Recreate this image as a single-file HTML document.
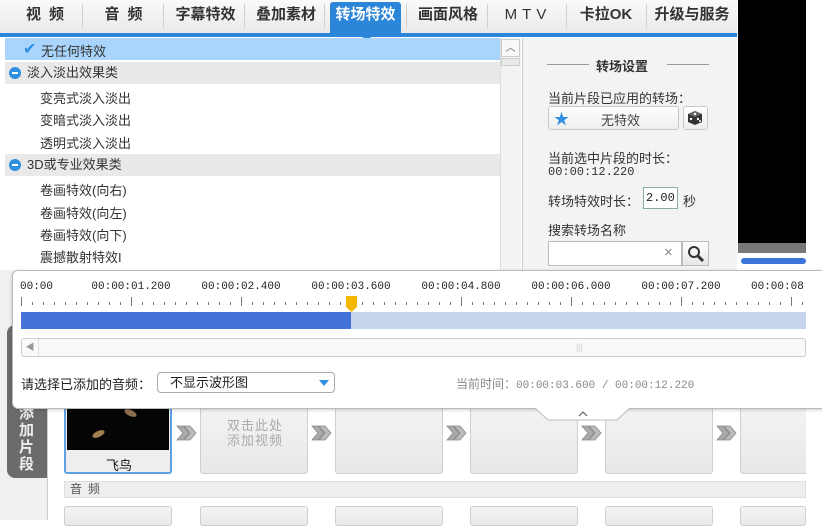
<!DOCTYPE html>
<html><head><meta charset="utf-8"><style>
*{box-sizing:border-box;margin:0;padding:0}
body{width:822px;height:520px;overflow:hidden;background:#fff;position:relative;font-family:"Liberation Sans","Noto Sans CJK SC",sans-serif;font-size:13px;color:#222}
.a{position:absolute}
.tab{position:absolute;top:0;height:30px;line-height:30px;font-size:15px;color:#333;text-align:center;font-weight:bold}
.sep{position:absolute;top:4px;width:1px;height:24px;background:#d0d0d0}
.item{position:absolute;left:40px;font-size:13px;color:#333}
.grp{position:absolute;left:5px;width:495px;height:22px;background:#e9e9e9;line-height:22px;font-size:13px;color:#333}
.grp i{position:absolute;left:4px;top:5px;width:12px;height:12px;border-radius:50%;background:#2f8fe0}
.grp i:after{content:"";position:absolute;left:3px;top:5px;width:6px;height:2px;background:#fff}
.grp span{position:absolute;left:22px}
.box{position:absolute;border:1px solid #cfcfcf;border-radius:3px;background:linear-gradient(#f4f4f4,#e8e8e8)}
.arr{position:absolute}
.mono{font-family:"Liberation Mono",monospace}
.lb{position:absolute;top:281px;font-family:"Liberation Mono",monospace;font-size:11px;color:#222;width:80px;text-align:center}
</style></head><body>
<div class="a" style="left:0;top:0;width:737px;height:33px;background:linear-gradient(#fafafa,#e9e9e9)"></div>
<div class="a" style="left:0;top:33px;width:737px;height:4px;background:#2b85d8"></div>
<div class="tab" style="left:18px;width:62px;letter-spacing:8px">视频</div>
<div class="sep" style="left:82px"></div>
<div class="tab" style="left:95px;width:65px;letter-spacing:8px">音频</div>
<div class="sep" style="left:163px"></div>
<div class="tab" style="left:168px;width:75px">字幕特效</div>
<div class="sep" style="left:244px"></div>
<div class="tab" style="left:248px;width:76px">叠加素材</div>
<div class="sep" style="left:324px"></div>
<div class="a" style="left:330px;top:2px;width:71px;height:31px;background:#2b85d8;border-radius:3px 3px 0 0"></div>
<div class="a" style="left:361px;top:33px;width:12px;height:6px;background:#2b85d8;border-radius:0 0 6px 6px"></div>
<div class="tab" style="left:330px;width:71px;color:#fff">转场特效</div>
<div class="sep" style="left:406px"></div>
<div class="tab" style="left:410px;width:76px">画面风格</div>
<div class="sep" style="left:487px"></div>
<div class="tab" style="left:490px;width:76px;letter-spacing:5px;font-weight:normal">MTV</div>
<div class="sep" style="left:566px"></div>
<div class="tab" style="left:568px;width:76px">卡拉OK</div>
<div class="sep" style="left:646px"></div>
<div class="tab" style="left:648px;width:88px">升级与服务</div>
<div class="a" style="left:738px;top:0;width:68px;height:243px;background:#000"></div>
<div class="a" style="left:738px;top:243px;width:68px;height:10px;background:#777"></div>
<div class="a" style="left:738px;top:253px;width:68px;height:17px;background:#fff"></div>
<div class="a" style="left:741px;top:258px;width:65px;height:6px;background:#3b74d8;border-radius:3px"></div>
<div class="a" style="left:5px;top:38px;width:495px;height:22px;background:#a9d4fb"></div>
<div class="a" style="left:23px;top:39px;font-size:16px;color:#2f8fe0">✔</div>
<div class="a" style="left:41px;top:41px;color:#333">无任何特效</div>
<div class="grp" style="top:62px"><i></i><span>淡入淡出效果类</span></div>
<div class="item" style="top:88px">变亮式淡入淡出</div>
<div class="item" style="top:110px">变暗式淡入淡出</div>
<div class="item" style="top:133px">透明式淡入淡出</div>
<div class="grp" style="top:154px"><i></i><span>3D或专业效果类</span></div>
<div class="item" style="top:180px">卷画特效(向右)</div>
<div class="item" style="top:203px">卷画特效(向左)</div>
<div class="item" style="top:225px">卷画特效(向下)</div>
<div class="item" style="top:247px">震撼散射特效I</div>
<div class="a" style="left:500px;top:38px;width:21px;height:232px;background:#f3f3f3;border-left:1px solid #ddd"></div>
<div class="a" style="left:501px;top:39px;width:19px;height:18px;border:1px solid #ccc;background:#f8f8f8;text-align:center;font-size:10px;color:#666;line-height:18px">︿</div>
<div class="a" style="left:501px;top:58px;width:19px;height:8px;border:1px solid #ccc;background:#e9e9e9"></div>
<div class="a" style="left:522px;top:38px;width:215px;height:232px;background:#f3f3f3;border-left:1px solid #ccc"></div>
<div class="a" style="left:547px;top:64px;width:42px;height:1px;background:#999"></div>
<div class="a" style="left:667px;top:64px;width:42px;height:1px;background:#999"></div>
<div class="a" style="left:596px;top:56px;font-weight:bold;color:#333">转场设置</div>
<div class="a" style="left:548px;top:88px;color:#333">当前片段已应用的转场：</div>
<div class="a" style="left:548px;top:106px;width:131px;height:24px;border:1px solid #c8c8c8;border-radius:3px;background:linear-gradient(#fff,#eee)"></div>
<div class="a" style="left:554px;top:108px;color:#2f8fe0;font-size:15px">★</div>
<div class="a" style="left:601px;top:110px;color:#444">无特效</div>
<div class="a" style="left:683px;top:106px;width:25px;height:24px;border:1px solid #c8c8c8;border-radius:3px;background:linear-gradient(#fff,#eee)"></div>
<svg class="a" style="left:686px;top:109px" width="19" height="18"><path d="M9 2L16 5L16 13L9 16L2 13L2 5Z" fill="#333"/><path d="M9 2L16 5L9 8L2 5Z" fill="#666"/><circle cx="9" cy="5" r="1.2" fill="#fff"/><circle cx="5" cy="10" r="1.2" fill="#fff"/><circle cx="12" cy="10" r="1.2" fill="#fff"/><circle cx="14" cy="12" r="1" fill="#fff"/></svg>
<div class="a" style="left:548px;top:148px;color:#333">当前选中片段的时长：</div>
<div class="a mono" style="left:548px;top:165px;color:#333;font-size:12px">00:00:12.220</div>
<div class="a" style="left:548px;top:191px;color:#333">转场特效时长：</div>
<div class="a mono" style="left:643px;top:187px;width:35px;height:22px;border:1px solid #8aa;background:#fff;font-size:12px;line-height:20px;padding-left:2px">2.00</div>
<div class="a" style="left:683px;top:191px;color:#333">秒</div>
<div class="a" style="left:548px;top:220px;color:#333">搜索转场名称</div>
<div class="a" style="left:548px;top:241px;width:134px;height:25px;border:1px solid #bbb;background:#fff"></div>
<div class="a" style="left:664px;top:244px;color:#888;font-size:15px">×</div>
<div class="a" style="left:682px;top:241px;width:27px;height:25px;border:1px solid #bbb;background:linear-gradient(#fff,#e8e8e8)"></div>
<svg class="a" style="left:686px;top:244px" width="20" height="20"><circle cx="8" cy="8" r="5" fill="none" stroke="#333" stroke-width="2"/><path d="M12 12L17 17" stroke="#333" stroke-width="3"/></svg>
<!-- bottom -->
<div class="a" style="left:0;top:270px;width:47px;height:250px;background:#f0f0f0"></div>
<div class="a" style="left:7px;top:325px;width:40px;height:153px;background:#6b6b6b;border-radius:8px 0 0 8px"></div>
<div class="a" style="left:19px;top:405px;width:16px;color:#eee;font-size:15px;font-weight:bold;line-height:17px">添加片段</div>
<div class="a" style="left:47px;top:270px;width:1px;height:250px;background:#ccc"></div>
<div class="box" style="left:64px;top:402px;width:108px;height:72px;border:2px solid #5fa0e0;background:#eee"></div>
<div class="a" style="left:67px;top:402px;width:102px;height:48px;background:#050505"></div>
<div class="a" style="left:124px;top:410px;width:13px;height:6px;background:#8a7050;border-radius:50%;transform:rotate(25deg)"></div>
<div class="a" style="left:92px;top:431px;width:13px;height:6px;background:#a08050;border-radius:50%;transform:rotate(-25deg)"></div>
<div class="a" style="left:106px;top:455px;font-size:13px;color:#111">飞鸟</div>
<div class="box" style="left:200px;top:402px;width:108px;height:72px"></div>
<div class="a" style="left:223px;top:418px;width:64px;color:#aaa;font-size:13px;line-height:15px;text-align:center;letter-spacing:1px">双击此处<br>添加视频</div>
<div class="box" style="left:335px;top:402px;width:108px;height:72px"></div>
<div class="box" style="left:470px;top:402px;width:108px;height:72px"></div>
<div class="box" style="left:605px;top:402px;width:108px;height:72px"></div>
<div class="box" style="left:740px;top:402px;width:80px;height:72px"></div>
<svg class="a" style="left:0;top:424px" width="822" height="20"><defs><g id="ar"><path d="M0 2H6L12 9L6 16H0L6 9Z" fill="#aaa" stroke="#888" stroke-width=".8"/><path d="M7 2H13L19 9L13 16H7L13 9Z" fill="#bbb" stroke="#888" stroke-width=".8"/></g></defs>
<use href="#ar" x="177"/><use href="#ar" x="312"/><use href="#ar" x="447"/><use href="#ar" x="582"/><use href="#ar" x="717"/></svg>
<div class="a" style="left:64px;top:481px;width:742px;height:17px;background:#eee;border:1px solid #ddd;font-size:12px;color:#555;padding-left:5px;letter-spacing:6px;line-height:15px">音频</div>
<div class="box" style="left:64px;top:506px;width:108px;height:20px"></div>
<div class="box" style="left:200px;top:506px;width:108px;height:20px"></div>
<div class="box" style="left:335px;top:506px;width:108px;height:20px"></div>
<div class="box" style="left:470px;top:506px;width:108px;height:20px"></div>
<div class="box" style="left:605px;top:506px;width:108px;height:20px"></div>
<div class="box" style="left:740px;top:506px;width:66px;height:20px"></div>
<div class="a" style="left:806px;top:0;width:16px;height:520px;background:#fff"></div>
<!-- popup -->
<div class="a" style="left:12px;top:270px;width:810px;height:139px;background:#fff;border:1px solid #bbb;border-right:none;border-radius:6px 0 0 6px;box-shadow:0 1px 3px rgba(0,0,0,.2)"></div>
<svg class="a" style="left:535px;top:407px" width="95" height="16"><path d="M0 1L13 13H82L95 1" fill="#fff" stroke="#bbb"/><path d="M2 0H93" stroke="#fff" stroke-width="2"/><path d="M44 9L48 5L52 9" fill="none" stroke="#555"/></svg>
<div class="lb" style="left:20px;text-align:left">00:00</div>
<div class="lb" style="left:91px">00:00:01.200</div>
<div class="lb" style="left:201px">00:00:02.400</div>
<div class="lb" style="left:311px">00:00:03.600</div>
<div class="lb" style="left:421px">00:00:04.800</div>
<div class="lb" style="left:531px">00:00:06.000</div>
<div class="lb" style="left:641px">00:00:07.200</div>
<div class="lb" style="left:751px;width:60px;text-align:left">00:00:08</div>
<svg class="a" style="left:0;top:296px" width="822" height="12">
<g stroke="#777" stroke-width="1">
<path d="M21.5 1V10M131.5 1V10M241.5 1V10M351.5 1V10M461.5 1V10M571.5 1V10M681.5 1V10M791.5 1V10"/>
<path d="M32.5 6V9M43.5 6V9M54.5 6V9M65.5 6V9M76.5 6V9M87.5 6V9M98.5 6V9M109.5 6V9M120.5 6V9M142.5 6V9M153.5 6V9M164.5 6V9M175.5 6V9M186.5 6V9M197.5 6V9M208.5 6V9M219.5 6V9M230.5 6V9M252.5 6V9M263.5 6V9M274.5 6V9M285.5 6V9M296.5 6V9M307.5 6V9M318.5 6V9M329.5 6V9M340.5 6V9M362.5 6V9M373.5 6V9M384.5 6V9M395.5 6V9M406.5 6V9M417.5 6V9M428.5 6V9M439.5 6V9M450.5 6V9M472.5 6V9M483.5 6V9M494.5 6V9M505.5 6V9M516.5 6V9M527.5 6V9M538.5 6V9M549.5 6V9M560.5 6V9M582.5 6V9M593.5 6V9M604.5 6V9M615.5 6V9M626.5 6V9M637.5 6V9M648.5 6V9M659.5 6V9M670.5 6V9M692.5 6V9M703.5 6V9M714.5 6V9M725.5 6V9M736.5 6V9M747.5 6V9M758.5 6V9M769.5 6V9M780.5 6V9M802.5 6V9"/>
</g></svg>
<div class="a" style="left:21px;top:312px;width:330px;height:17px;background:#4472d8"></div>
<div class="a" style="left:351px;top:312px;width:455px;height:17px;background:#c5d6ec"></div>
<svg class="a" style="left:345px;top:295px" width="13" height="18"><path d="M1 1H12V12L6.5 17L1 12Z" fill="#f5b800"/></svg>
<div class="a" style="left:21px;top:338px;width:785px;height:19px;border:1px solid #ccc;border-radius:3px;background:#f8f9fb"></div>
<div class="a" style="left:22px;top:339px;width:17px;height:17px;border-right:1px solid #ddd;color:#999;font-size:9px;line-height:17px;text-align:center">◀</div>
<div class="a" style="left:576px;top:342px;color:#ccc;font-size:9px">|||</div>
<div class="a" style="left:21px;top:374px;color:#222">请选择已添加的音频：</div>
<div class="a" style="left:157px;top:372px;width:178px;height:21px;border:1px solid #aaa;border-radius:4px;background:#fff;padding-left:12px;line-height:19px;color:#222">不显示波形图</div>
<svg class="a" style="left:318px;top:379px" width="12" height="8"><path d="M1 1H11L6 7Z" fill="#2f8fe0"/></svg>
<div class="a" style="left:456px;top:375px;color:#888;font-size:12px">当前时间：<span class="mono" style="font-size:11px">00:00:03.600 / 00:00:12.220</span></div>
</body></html>
